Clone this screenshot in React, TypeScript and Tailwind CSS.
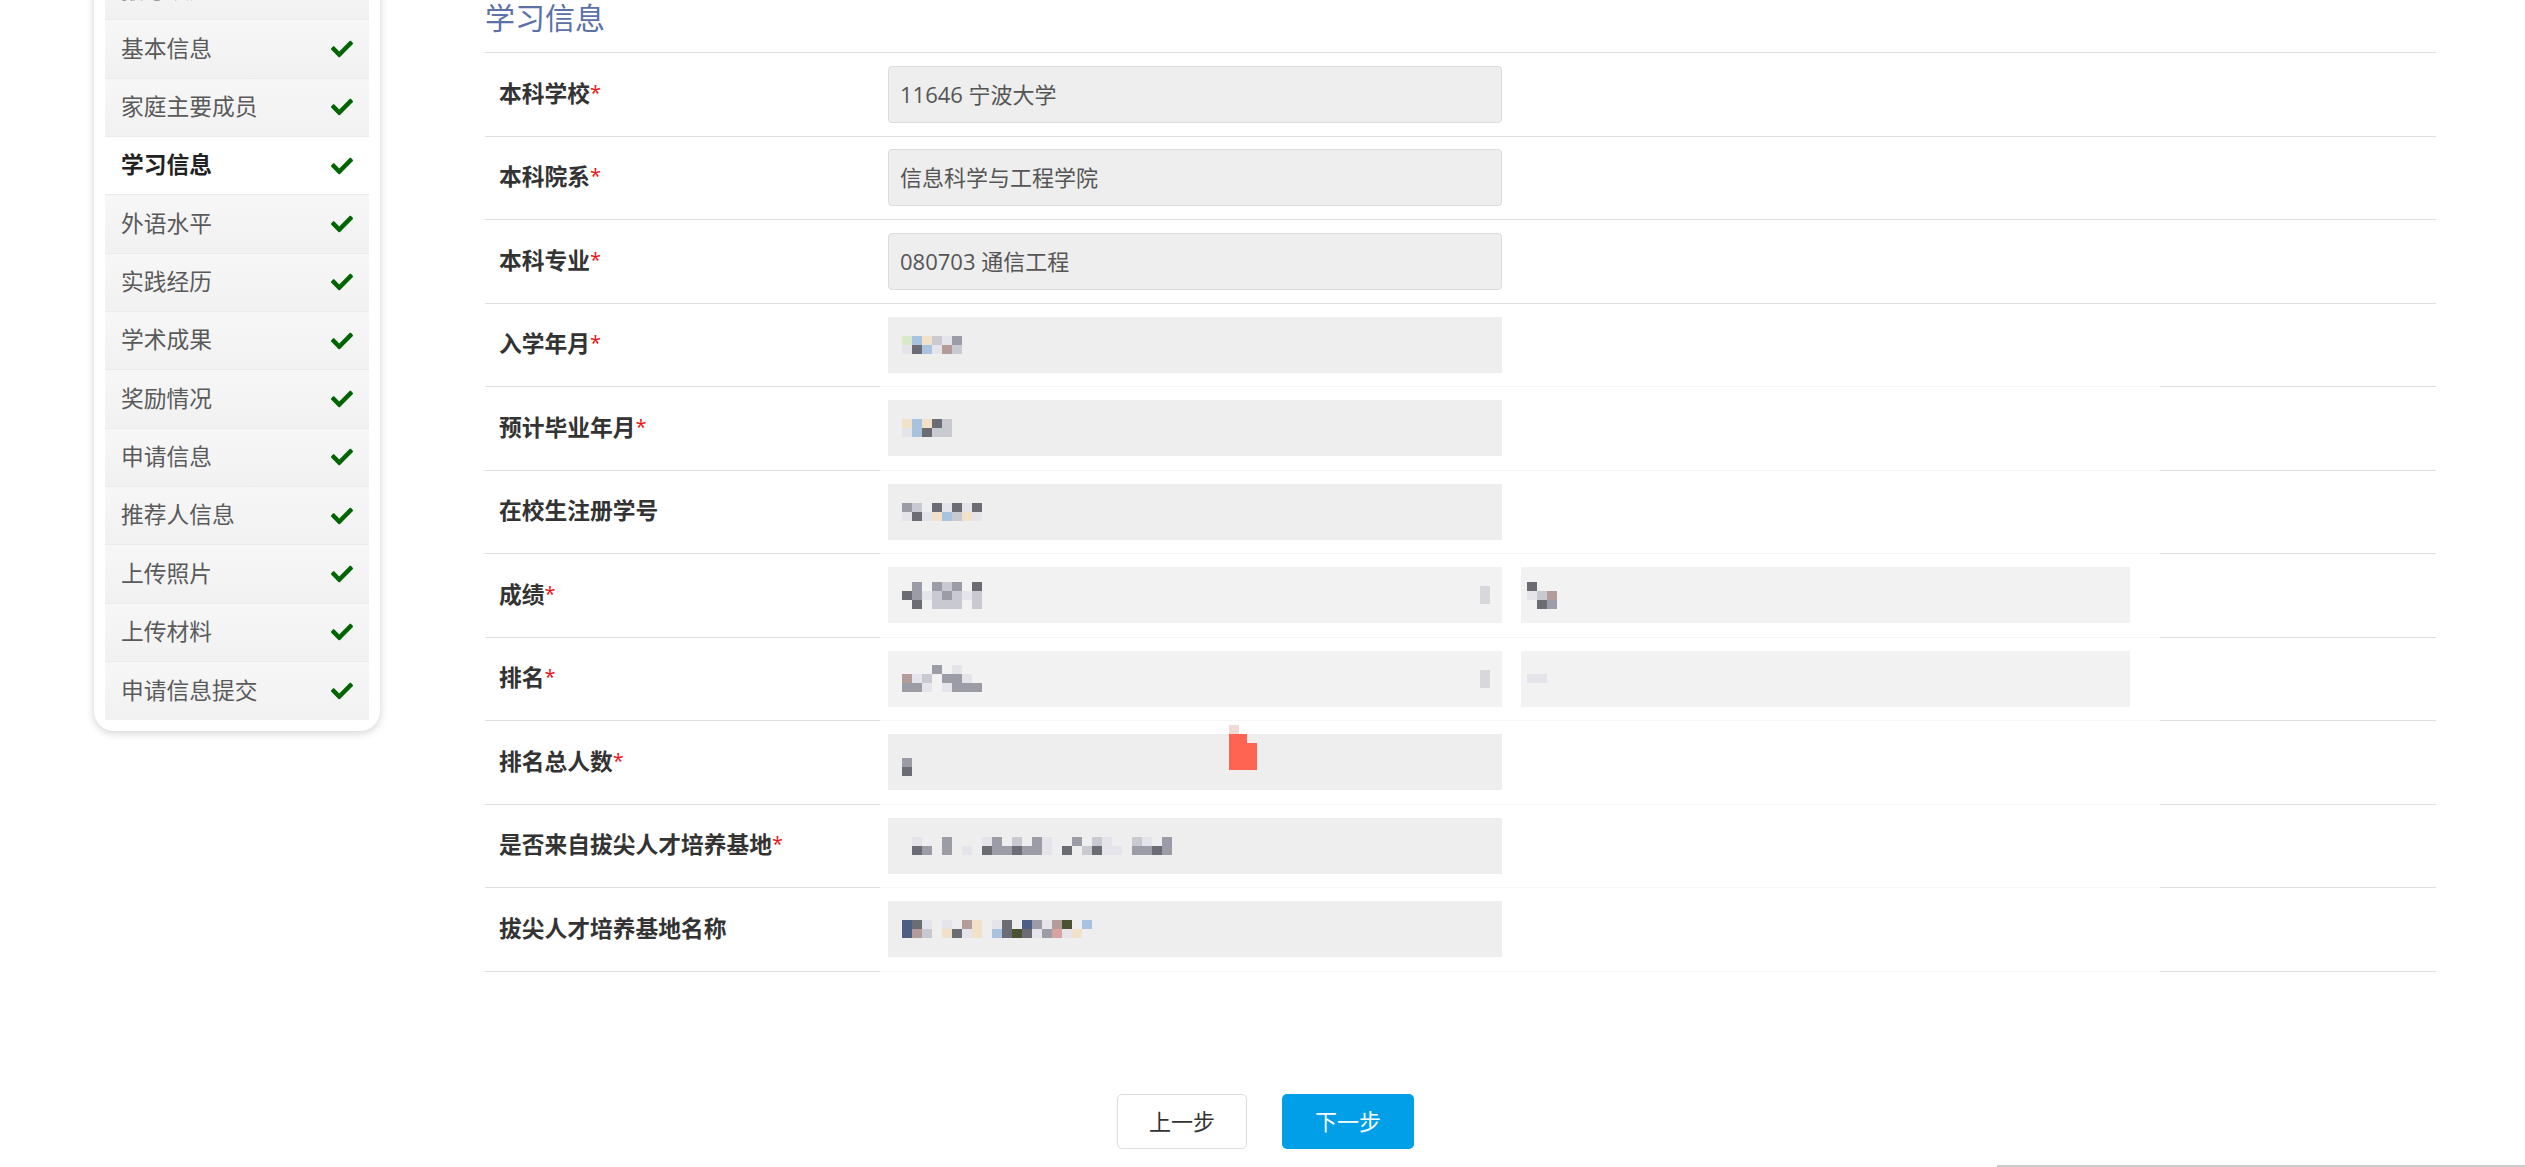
import React from 'react';
import { FaCheck } from 'react-icons/fa';

const font = '"Open Sans", "Noto Sans CJK SC", "Noto Sans", sans-serif';

const steps = [
  '报考须知',
  '基本信息',
  '家庭主要成员',
  '学习信息',
  '外语水平',
  '实践经历',
  '学术成果',
  '奖励情况',
  '申请信息',
  '推荐人信息',
  '上传照片',
  '上传材料',
  '申请信息提交',
];

// mosaic palette for the blurred (privacy) values
const palette: Record<string, string> = {
  d: '#6c6c74',
  m: '#9c9ca6',
  l: '#c9c9d1',
  w: '#e4e4ea',
  b: '#a9c3df',
  y: '#f1e1c9',
  g: '#d9e8c9',
  r: '#b39c9a',
  n: '#4d5d84',
  k: '#4b5133',
  p: '#d6a3a0',
};

type Row = {
  label: string;
  req?: boolean;
  value?: string;
  mosaic?: string[];
  second?: string[];
  light?: boolean;
  masked?: boolean;
  cursor?: boolean;
};

const rows: Row[] = [
  { label: '本科学校', req: true, value: '11646 宁波大学' },
  { label: '本科院系', req: true, value: '信息科学与工程学院' },
  { label: '本科专业', req: true, value: '080703 通信工程' },
  { label: '入学年月', req: true, masked: true, mosaic: ['gbylwm', 'wdbwrl'] },
  { label: '预计毕业年月', req: true, masked: true, mosaic: ['ybydl', 'wbdll'] },
  { label: '在校生注册学号', masked: true, mosaic: ['ml.dwdwd', 'wdwyblyw'] },
  {
    label: '成绩',
    req: true,
    masked: true,
    light: true,
    mosaic: ['.m.mlm.d', 'dmwlmlwl', '.d.lll.l'],
    second: ['d..', 'wlr', '.dm'],
  },
  {
    label: '排名',
    req: true,
    masked: true,
    light: true,
    mosaic: ['...m.w..', 'rwl.mmw.', 'mmw.wmmm'],
    second: ['...', 'ww.', '...'],
  },
  { label: '排名总人数', req: true, masked: true, mosaic: ['.', 'm', 'd'], cursor: true },
  {
    label: '是否来自拔尖人才培养基地',
    req: true,
    masked: true,
    mosaic: ['.w..m...wm.l.mw..m.lw..lw.m', '.dm.m.w.dmmdmmw.d.ldww.mmdm'],
  },
  {
    label: '拔尖人才培养基地名称',
    masked: true,
    mosaic: ['ndw.w.ry.wd.nmwrk.b', 'nrl.ydwy.bdkdwmpwy'],
  },
];

function Mosaic({ pattern, cell = 10 }: { pattern: string[]; cell?: number }) {
  return (
    <div className="flex flex-col">
      {pattern.map((line, i) => (
        <div key={i} className="flex">
          {line.split('').map((c, j) => (
            <div
              key={j}
              style={{ width: cell, height: 9, background: palette[c] ?? 'transparent' }}
            />
          ))}
        </div>
      ))}
    </div>
  );
}

function Sidebar() {
  return (
    <aside className="w-[286px] mt-[-49px] bg-white rounded-b-[20px] shadow-[0_2px_9px_rgba(0,0,0,0.18)] p-[11px] shrink-0">
      {steps.map((s, i) => {
        const active = s === '学习信息';
        return (
          <div
            key={s}
            className={`h-[58.33px] flex items-center justify-between pl-[16px] pr-[16px] border-b border-[#ebebeb] ${
              active ? 'bg-white' : 'bg-gradient-to-b from-[#f7f7f8] to-[#f1f1f2]'
            } ${i === steps.length - 1 ? 'border-b-0' : ''}`}
          >
            <span
              className={`text-[22.75px] leading-none ${
                active ? 'font-bold text-[#222]' : 'text-[#5a5a5a]'
              }`}
            >
              {s}
            </span>
            <FaCheck className="text-[#006400] w-[22px] h-[22px]" />
          </div>
        );
      })}
    </aside>
  );
}

function Line({ masked }: { masked?: boolean }) {
  if (!masked) return <div className="h-px bg-[#dedede]" />;
  return (
    <div className="h-px flex">
      <div className="w-[395px] bg-[#dedede]" />
      <div className="w-[1280px] bg-[#f6f6f6]" />
      <div className="flex-1 bg-[#dedede]" />
    </div>
  );
}

function Field({ row }: { row: Row }) {
  const bg = row.light ? 'bg-[#f2f2f2]' : 'bg-[#eeeeee]';
  return (
    <div>
      <div className="h-[82.5px] flex items-center">
        <div className="w-[403px] pl-[14px] text-[22.75px] font-bold text-[#333] leading-none">
          {row.label}
          {row.req && <span className="text-[#ee1111] font-normal align-top text-[20px]">*</span>}
        </div>
        {row.value ? (
          <div className="w-[614px] h-[57px] bg-[#eeeeee] border border-[#dcdcdc] rounded-[4px] flex items-center pl-[11px] text-[22px] text-[#555]">
            {row.value}
          </div>
        ) : (
          <div className="flex gap-[19px]">
            <div
              className={`relative w-[614px] h-[56px] ${bg} flex items-center justify-between pl-[14px] pr-[12px]`}
            >
              <Mosaic pattern={row.mosaic ?? []} />
              {row.second && <div className="w-[10px] h-[18px] bg-[#d8d8dc]" />}
              {row.cursor && (
                <div className="absolute left-[341px] top-[-9px] flex flex-col">
                  <div className="w-[10px] h-[9px] bg-[#f1d9da]" />
                  <div className="w-[18px] h-[9px] bg-[#ff6352]" />
                  <div className="w-[28px] h-[27px] bg-[#ff6352]" />
                </div>
              )}
            </div>
            {row.second && (
              <div className={`w-[609px] h-[56px] ${bg} flex items-center pl-[6px]`}>
                <Mosaic pattern={row.second} />
              </div>
            )}
          </div>
        )}
      </div>
      <Line masked={row.masked} />
    </div>
  );
}

export default function App() {
  return (
    <div
      className="w-[2525px] h-[1167px] overflow-hidden bg-white flex flex-col"
      style={{ fontFamily: font }}
    >
      <div className="flex items-start pl-[94px]">
        <Sidebar />
        <main className="ml-[105px] w-[1951px]">
          <div className="h-[52px] flex items-start">
            <h2 className="text-[30px] leading-[35px] text-[#5b71a8] font-normal">学习信息</h2>
          </div>
          <div className="h-px bg-[#dedede]" />
          {rows.map((r) => (
            <Field key={r.label} row={r} />
          ))}
        </main>
      </div>

      <div className="flex justify-center gap-[35px] mt-[122px] pl-[6px]">
        <button className="w-[130px] h-[55px] bg-white border border-[#dddddd] rounded-[5px] text-[22px] text-[#333]">
          上一步
        </button>
        <button className="w-[132px] h-[55px] bg-[#009fe8] rounded-[5px] text-[22px] text-white">
          下一步
        </button>
      </div>

      <div className="flex justify-end mt-[16px]">
        <div className="w-[528px] h-[2px] bg-[#cccccc]" />
      </div>
    </div>
  );
}
